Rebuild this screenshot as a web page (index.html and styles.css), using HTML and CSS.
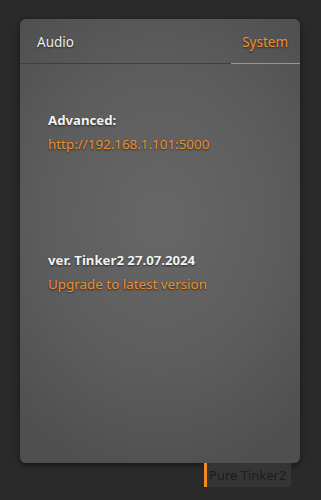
FILE: index.html
```html
<!DOCTYPE html>
<html>
<head>
<meta charset="utf-8">
<link rel="stylesheet" href="styles.css">
</head>
<body>
<div class="card">
  <div class="tabs">
    <div class="tab">Audio</div>
    <div class="tab active">System</div>
  </div>
  <div class="content">
    <div class="group first">
      <div class="label">Advanced:</div>
      <div class="link">http://192.168.1.101:5000</div>
    </div>
    <div class="group second">
      <div class="label">ver. Tinker2 27.07.2024</div>
      <div class="link">Upgrade to latest version</div>
    </div>
  </div>
</div>
<div class="footer">
  <div class="badge">Pure Tinker2</div>
</div>
</body>
</html>
```
FILE: styles.css
```css
html, body {
  margin: 0;
  padding: 0;
  background: #2a2a2a;
  height: 500px;
  overflow: hidden;
}
body {
  font-family: "Noto Sans", "Open Sans", sans-serif;
  display: flex;
  flex-direction: column;
  align-items: flex-start;
  padding: 19px 0 0 20px;
  box-sizing: border-box;
}
.card {
  width: 280px;
  height: 444px;
  border-radius: 6px;
  background: radial-gradient(ellipse 75% 60% at 50% 45%, #676767 0%, #5d5d5d 55%, #4f4f4f 100%);
  box-shadow: 0 2px 6px rgba(0,0,0,0.5);
  display: flex;
  flex-direction: column;
}
.tabs {
  height: 44px;
  display: flex;
  justify-content: space-between;
  border-bottom: 1px solid #3f3f3f;
}
.tab {
  font-size: 13.5px;
  color: #ececec;
  text-shadow: 0 1px 2px rgba(0,0,0,0.6);
  padding: 0 17px;
  line-height: 46px;
  position: relative;
}
.tab.active {
  color: #f0902a;
  padding: 0 12px 0 11px;
}
.tab.active::after {
  content: "";
  position: absolute;
  left: 0;
  right: 0;
  bottom: -1px;
  height: 1px;
  background: #e8841f;
}
.content {
  padding-left: 28px;
  display: flex;
  flex-direction: column;
}
.group.first { margin-top: 44px; }
.group.second { margin-top: 92px; }
.label {
  font-weight: bold;
  color: #f2f2f2;
  font-size: 13.2px;
  line-height: 24px;
  text-shadow: 0 1px 2px rgba(0,0,0,0.6);
}
.link {
  color: #ee8e2b;
  font-size: 13.4px;
  line-height: 24px;
  text-shadow: 0 1px 2px rgba(0,0,0,0.6);
}
.footer {
  width: 280px;
  display: flex;
}
.badge {
  margin-left: 184px;
  height: 24px;
  width: 82px;
  background: #353535;
  border-left: 3px solid #f08a1e;
  color: #1c1c1c;
  font-size: 13px;
  line-height: 24px;
  padding-left: 2px;
  white-space: nowrap;
}
```
